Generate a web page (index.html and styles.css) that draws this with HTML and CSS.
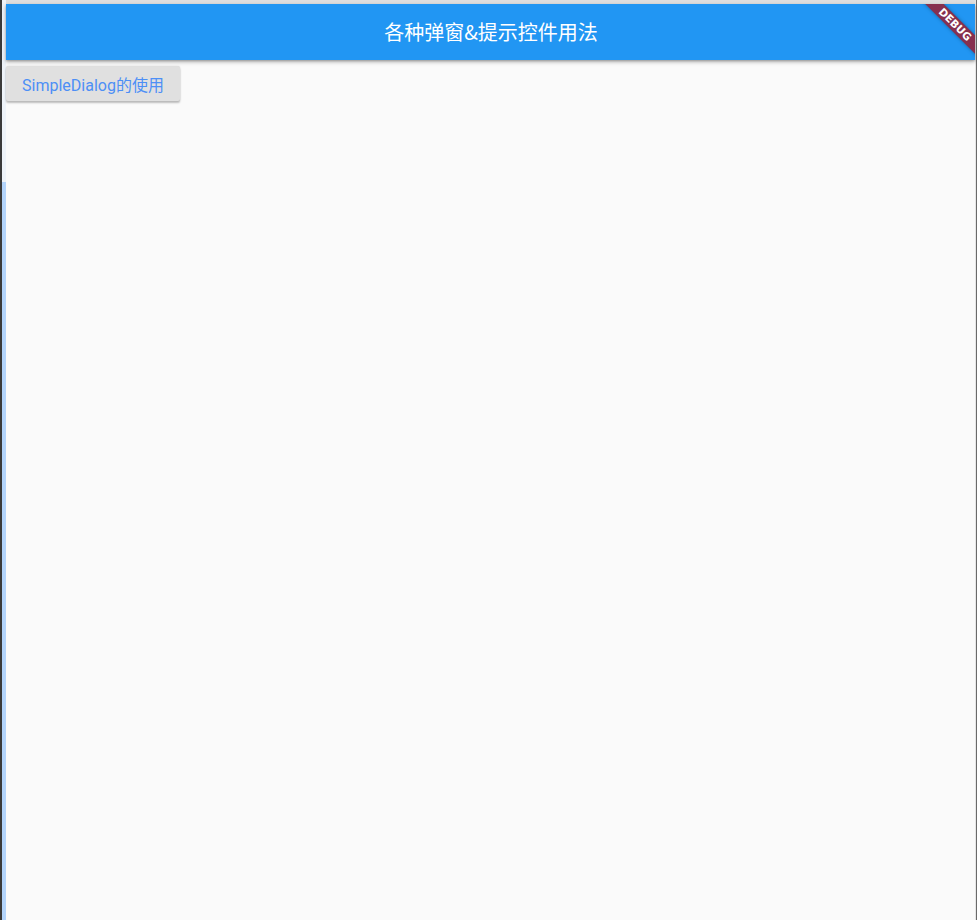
FILE: index.html
```html
<!DOCTYPE html>
<html lang="zh-CN">
<head>
<meta charset="utf-8">
<title>各种弹窗&amp;提示控件用法</title>
<link rel="stylesheet" href="styles.css">
</head>
<body>
<div class="window">
  <div class="edge-dark"></div>
  <div class="edge-light">
    <div class="edge-light-top"></div>
    <div class="edge-light-blue"></div>
  </div>
  <div class="main">
    <div class="top-strip"></div>
    <div class="app">
      <header class="appbar">
        <h1 class="title">各种弹窗&amp;提示控件用法</h1>
        <div class="banner"><span>DEBUG</span></div>
      </header>
      <div class="content">
        <button class="raised">SimpleDialog的使用</button>
      </div>
    </div>
  </div>
  <div class="edge-right">
    <div class="edge-right-light"></div>
    <div class="edge-right-dark"></div>
  </div>
</div>
</body>
</html>
```
FILE: styles.css
```css
html, body {
  margin: 0;
  padding: 0;
  height: 100%;
  background: #fafafa;
}
.window {
  display: flex;
  height: 920px;
  width: 977px;
  overflow: hidden;
}
.edge-dark {
  width: 2px;
  background: #3a3a3a;
  flex: none;
}
.edge-light {
  width: 4px;
  flex: none;
  display: flex;
  flex-direction: column;
}
.edge-light-top {
  height: 182px;
  background: #eef3f9;
}
.edge-light-blue {
  flex: 1;
  background: #b3d4fb;
}
.main {
  flex: 1;
  display: flex;
  flex-direction: column;
  min-width: 0;
}
.top-strip {
  height: 4px;
  background: #dedede;
  flex: none;
}
.app {
  flex: 1;
  background: #fafafa;
  display: flex;
  flex-direction: column;
}
.appbar {
  position: relative;
  height: 56px;
  background: #2196f3;
  display: flex;
  align-items: center;
  justify-content: center;
  overflow: hidden;
  box-shadow: 0 2px 4px rgba(0,0,0,0.28), 0 1px 2px rgba(0,0,0,0.2);
  z-index: 2;
  flex: none;
}
.title {
  margin: 0;
  color: #ffffff;
  font-family: "Noto Sans CJK SC", "Noto Sans", sans-serif;
  font-size: 20px;
  font-weight: 400;
  line-height: 1;
  padding-left: 1px;
}
.banner {
  position: absolute;
  top: 14px;
  right: -40px;
  width: 120px;
  height: 13px;
  background: #86304f;
  transform: rotate(45deg);
  display: flex;
  align-items: center;
  justify-content: center;
  box-shadow: 0 0 4px rgba(0,0,0,0.35);
}
.banner span {
  color: #ffffff;
  font-family: "DejaVu Sans", "Liberation Sans", sans-serif;
  font-weight: 900;
  font-size: 10.5px;
  line-height: 1;
}
.content {
  padding-top: 6px;
  display: flex;
  align-items: flex-start;
}
.raised {
  height: 35px;
  padding: 0 16px 0 16px;
  min-width: 174px;
  border: none;
  border-radius: 2px;
  background: #e0e0e0;
  color: #4d8ff6;
  font-family: "Roboto", "Noto Sans CJK SC", sans-serif;
  font-size: 16px;
  font-weight: 400;
  box-shadow: 0 2px 2px rgba(0,0,0,0.24), 0 0 2px rgba(0,0,0,0.12);
  cursor: pointer;
}
.edge-right {
  width: 2px;
  flex: none;
  display: flex;
}
.edge-right-light {
  width: 1px;
  background: #e6e6e6;
}
.edge-right-dark {
  width: 1px;
  background: #6a6a6a;
}
```
